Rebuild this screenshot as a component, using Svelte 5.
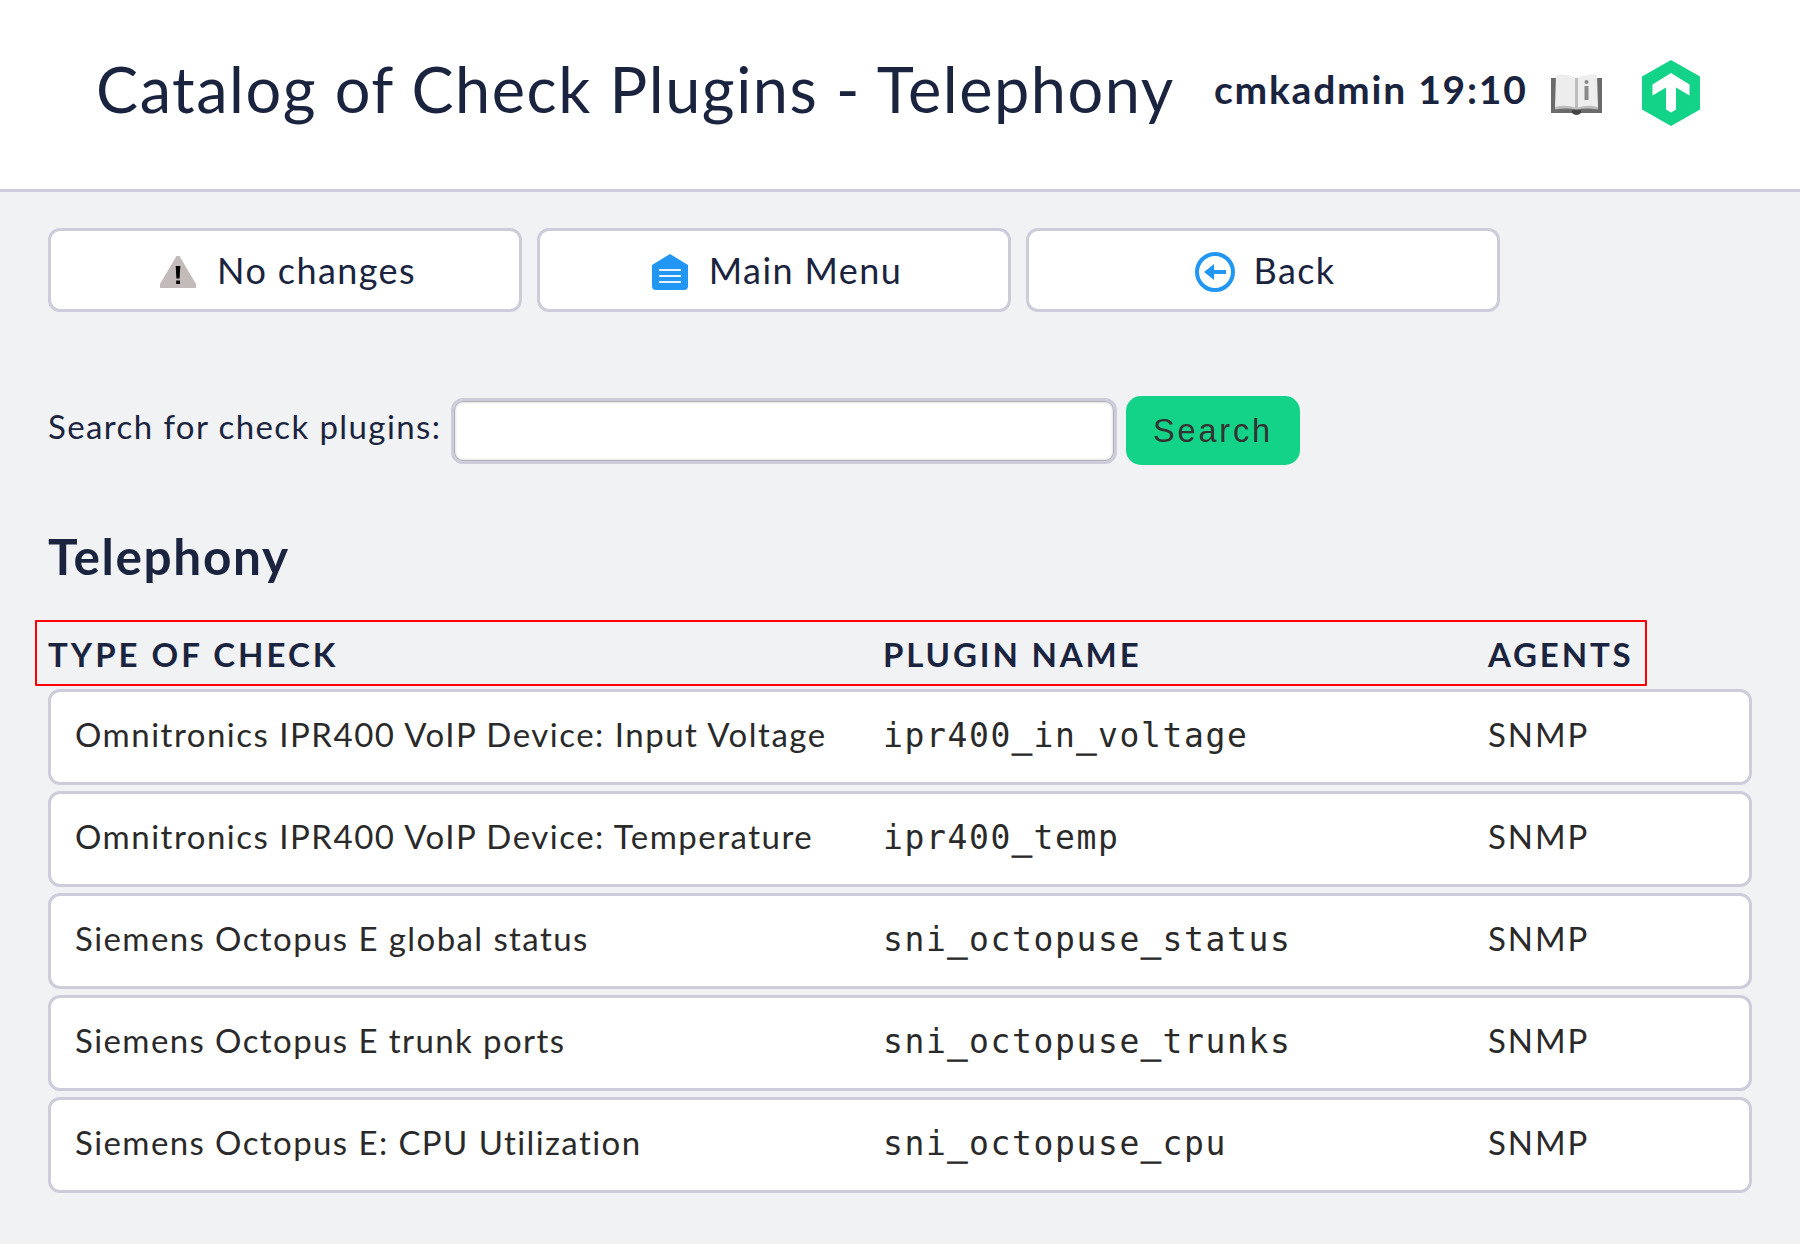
<script>
  let query = $state('');

  const buttons = [
    { label: 'No changes', icon: 'warning' },
    { label: 'Main Menu', icon: 'home' },
    { label: 'Back', icon: 'back' },
  ];

  const plugins = [
    { type: 'Omnitronics IPR400 VoIP Device: Input Voltage', name: 'ipr400_in_voltage', agent: 'SNMP' },
    { type: 'Omnitronics IPR400 VoIP Device: Temperature', name: 'ipr400_temp', agent: 'SNMP' },
    { type: 'Siemens Octopus E global status', name: 'sni_octopuse_status', agent: 'SNMP', tight: true },
    { type: 'Siemens Octopus E trunk ports', name: 'sni_octopuse_trunks', agent: 'SNMP', tight: true },
    { type: 'Siemens Octopus E: CPU Utilization', name: 'sni_octopuse_cpu', agent: 'SNMP', tight: true },
  ];
</script>

<div class="page">
  <header>
    <h1>Catalog of Check Plugins - Telephony</h1>
    <div class="user">cmkadmin 19:10</div>
    <svg class="book" viewBox="0 0 51 41" aria-hidden="true">
      <rect x="0" y="4" width="51" height="35" fill="#6b6b6b" />
      <path d="M21 36H30V39Q28 41 25.500 41T21 39Z" fill="#444" />
      <path d="M4 31H47V35.500Q36 33.500 25.500 35.500 15 33.500 4 35.500Z" fill="#bdbdbd" />
      <path d="M5 1Q15-1 25.500 4V34Q15 30 4 33Z" fill="#ededed" />
      <path d="M46 1Q36-1 25.500 4V34Q36 30 47 33Z" fill="#ededed" />
      <rect x="24" y="4" width="3" height="31" fill="#bdbdbd" />
      <circle cx="35.500" cy="8" r="2" fill="#8a8a8a" />
      <rect x="33.500" y="12" width="4" height="14" fill="#8a8a8a" />
    </svg>
    <svg class="logo" viewBox="0 0 58 66" aria-hidden="true">
      <path d="M29 0L58 16.500V49.500L29 66 0 49.500V16.500Z" fill="#13d389" />
      <path d="M29 13L47.500 24.500V35.500L34 27.500V49.500L29 52.500 24 49.500V27.500L10.500 35.500V24.500Z" fill="#fff" />
    </svg>
  </header>

  <nav>
    {#each buttons as b}
      <button class="context">
        <svg viewBox="0 0 42 42" aria-hidden="true">
          {#if b.icon === 'warning'}
            <path d="M19.500 5H22.500L39 33V37H3V33Z" fill="#c3baba" />
            <path d="M18.700 15H23.300L22.600 27.500H19.400Z" fill="#000" />
            <rect x="19.200" y="29.500" width="3.800" height="3.500" fill="#000" />
          {:else if b.icon === 'home'}
            <path d="M21 3L39 14V35Q39 39 35 39H7Q3 39 3 35V14Z" fill="#2196f3" />
            <path d="M10 19H32M10 25H32M10 31H32" stroke="#e8f7ff" stroke-width="2" />
          {:else}
            <circle cx="21" cy="21" r="18" fill="none" stroke="#2196f3" stroke-width="4" />
            <path d="M10 21L20 13V19H32V23H20V29Z" fill="#2196f3" />
          {/if}
        </svg>
        <span>{b.label}</span>
      </button>
    {/each}
  </nav>

  <form onsubmit={(e) => e.preventDefault()}>
    <label for="query">Search for check plugins:</label>
    <input id="query" type="text" bind:value={query} />
    <button class="submit">Search</button>
  </form>

  <h2>Telephony</h2>

  <section>
    <div class="row head">
      <span class="first">TYPE OF CHECK</span>
      <span>PLUGIN NAME</span>
      <span>AGENTS</span>
    </div>
    {#each plugins as p}
      <div class="row item">
        <span class:tight={p.tight}>{p.type}</span>
        <code>{#each p.name.split('_') as part, i}{#if i > 0}<span class="underscore">_</span>{/if}{part}{/each}</code>
        <span class="agent">{p.agent}</span>
      </div>
    {/each}
  </section>
</div>

<style>
  :global(body) {
    background: #f0f2f4;
  }
  .page {
    box-sizing: border-box;
    width: 1800px;
    height: 1244px;
    overflow: hidden;
    background: #f0f2f4;
    color: #1a243f;
    font: 33px/40px Lato, sans-serif;
    letter-spacing: 1.4px;
    white-space: nowrap;
  }
  header {
    box-sizing: border-box;
    height: 192px;
    padding-left: 96px;
    display: flex;
    background: #fff;
    border-bottom: 3px solid #ccccdb;
  }
  h1 {
    width: 1118px;
    margin: 0;
    font-size: 63px;
    font-weight: 400;
    line-height: 177px;
    letter-spacing: 1.56px;
  }
  .user {
    width: 337px;
    font-size: 39px;
    font-weight: 700;
    line-height: 179px;
    letter-spacing: 1.77px;
  }
  .book {
    width: 51px;
    height: 41px;
    margin-top: 74px;
  }
  .logo {
    width: 58px;
    height: 66px;
    margin: 59.5px 0 0 40px;
  }
  nav {
    display: flex;
    gap: 15px;
    margin: 36px 0 0 48px;
  }
  button {
    font: inherit;
    letter-spacing: inherit;
    color: inherit;
    border: 0;
  }
  .context {
    box-sizing: border-box;
    width: 474px;
    height: 84px;
    padding: 0 0 0 3px;
    display: flex;
    align-items: center;
    justify-content: center;
    gap: 18px;
    background: #fff;
    border: 3px solid #ccccdb;
    border-radius: 12px;
    font-size: 36px;
    letter-spacing: 1.4px;
  }
  .context svg {
    width: 42px;
    height: 42px;
    margin-top: 4px;
  }
  form {
    display: flex;
    align-items: center;
    height: 69px;
    margin: 84px 0 0 48px;
  }
  label {
    width: 403px;
    margin-bottom: 9px;
  }
  input {
    box-sizing: border-box;
    width: 666px;
    height: 66px;
    margin: 1px 9px 0 0;
    padding: 0 12px;
    font: inherit;
    background: #fff;
    border: 3px solid #ccccdb;
    border-radius: 12px;
    box-shadow: inset 0 0 0 1px #b2b2b4, inset 0 0 3px 1px #c8c8c8;
    outline: none;
  }
  .submit {
    width: 174px;
    height: 69px;
    padding: 1px 0 0;
    background: #13d389;
    border-radius: 15px;
    color: #333;
    font-family: 'Liberation Sans', Arial, sans-serif;
    font-size: 32.5px;
    letter-spacing: 2.8px;
  }
  h2 {
    margin: 61px 0 0 48px;
    font-size: 49.5px;
    line-height: 60px;
    letter-spacing: 1.66px;
  }
  section {
    width: 1704px;
    margin: 34px 0 0 48px;
    display: flex;
    flex-direction: column;
    gap: 6px;
  }
  .row {
    box-sizing: border-box;
    display: grid;
    grid-template-columns: 835px 605px 1fr;
    align-items: baseline;
  }
  .head {
    position: relative;
    height: 63px;
    padding-top: 14px;
    font-weight: 700;
    letter-spacing: 2.85px;
  }
  .first {
    letter-spacing: 3px;
  }
  /* Highlight frame drawn over the column titles */
  .head::after {
    content: '';
    position: absolute;
    left: -13px;
    top: 0;
    box-sizing: border-box;
    width: 1612px;
    height: 66px;
    border: 2px solid #f00;
    border-radius: 1px;
  }
  .item {
    height: 96px;
    padding: 22px 0 0 24px;
    grid-template-columns: 808px 605px 1fr;
    background: #fff;
    border: 3px solid #ccccdb;
    border-radius: 12px;
    color: #2a2a2a;
    letter-spacing: 1.5px;
  }
  .tight {
    letter-spacing: 1.41px;
  }
  code {
    font-family: 'DejaVu Sans Mono', monospace;
    letter-spacing: 1.63px;
  }
  .underscore {
    -webkit-text-stroke: 1px #2a2a2a;
  }
  .agent {
    letter-spacing: 1.9px;
  }
</style>
